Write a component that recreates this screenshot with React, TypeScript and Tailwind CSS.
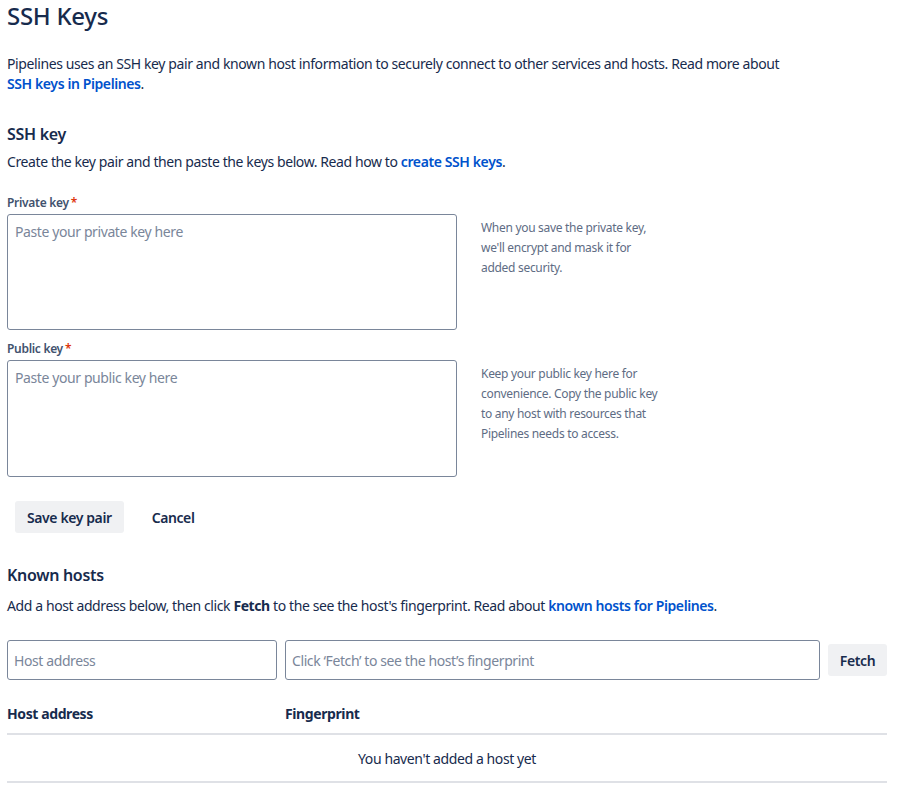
import React from "react";

export default function App() {
  return (
    <div
      className="bg-white text-[#172b4d] min-h-[799px] pl-[7px] pr-[22px]"
      style={{ fontFamily: '"Noto Sans", "Open Sans", sans-serif' }}
    >
      <h1 className="text-[24px] leading-[32px] font-medium tracking-[-0.3px]">SSH Keys</h1>
      <p className="mt-[22px] text-[14px] leading-[20px] w-[800px] tracking-[-0.4px]">
        Pipelines uses an SSH key pair and known host information to securely connect to other services and hosts. Read more about{" "}
        <br />
        <a className="text-[#0052cc] font-semibold">SSH keys in Pipelines</a>.
      </p>

      <h2 className="mt-[30px] text-[16px] leading-[20px] font-semibold tracking-[-0.3px]">SSH key</h2>
      <p className="mt-[8px] text-[14px] leading-[20px] tracking-[-0.4px]">
        Create the key pair and then paste the keys below. Read how to{" "}
        <a className="text-[#0052cc] font-semibold">create SSH keys</a>.
      </p>

      <div className="mt-[23px] flex gap-[24px]">
        <div className="w-[450px]">
          <label className="block text-[12px] leading-[16px] font-semibold text-[#42526e] tracking-[-0.3px]">
            Private key<span className="text-[#de350b] ml-[2px]">*</span>
          </label>
          <div className="mt-[3px] h-[116px] border border-[#7a869a] rounded-[3px] px-[7px] py-[7px] text-[14px] leading-[20px] text-[#7a869a] tracking-[-0.4px]">
            Paste your private key here
          </div>
        </div>
        <p className="mt-[23px] w-[185px] text-[12px] leading-[20px] text-[#5e6c84] tracking-[-0.3px]">
          When you save the private key, we'll encrypt and mask it for added security.
        </p>
      </div>

      <div className="mt-[11px] flex gap-[24px]">
        <div className="w-[450px]">
          <label className="block text-[12px] leading-[16px] font-semibold text-[#42526e] tracking-[-0.3px]">
            Public key<span className="text-[#de350b] ml-[2px]">*</span>
          </label>
          <div className="mt-[3px] h-[117px] border border-[#7a869a] rounded-[3px] px-[7px] py-[7px] text-[14px] leading-[20px] text-[#7a869a] tracking-[-0.4px]">
            Paste your public key here
          </div>
        </div>
        <p className="mt-[23px] w-[185px] text-[12px] leading-[20px] text-[#5e6c84] tracking-[-0.3px]">
          Keep your public key here for convenience. Copy the public key to any host with resources that Pipelines needs to access.
        </p>
      </div>

      <div className="mt-[24px] ml-[8px] flex items-center gap-[16px]">
        <button className="h-[32px] px-[12px] rounded-[3px] bg-[#f0f1f3] text-[14px] font-semibold text-[#172b4d] tracking-[-0.4px]">
          Save key pair
        </button>
        <button className="h-[32px] px-[12px] rounded-[3px] text-[14px] font-semibold text-[#172b4d] tracking-[-0.4px]">
          Cancel
        </button>
      </div>

      <h2 className="mt-[32px] text-[16px] leading-[20px] font-semibold tracking-[-0.3px]">Known hosts</h2>
      <p className="mt-[11px] text-[14px] leading-[20px] tracking-[-0.4px]">
        Add a host address below, then click <b className="font-bold">Fetch</b> to the see the host's fingerprint. Read about{" "}
        <a className="text-[#0052cc] font-semibold">known hosts for Pipelines</a>.
      </p>

      <div className="mt-[24px] flex items-center gap-[8px]">
        <div className="w-[270px] h-[40px] border border-[#7a869a] rounded-[3px] px-[6px] flex items-center text-[14px] text-[#7a869a] tracking-[-0.4px]">
          Host address
        </div>
        <div className="w-[535px] h-[40px] border border-[#7a869a] rounded-[3px] px-[6px] flex items-center text-[14px] text-[#7a869a] tracking-[-0.4px]">
          Click ‘Fetch’ to see the host’s fingerprint
        </div>
        <button className="h-[32px] w-[59px] rounded-[3px] bg-[#f0f1f3] text-[14px] font-semibold text-[#172b4d] tracking-[-0.4px]">
          Fetch
        </button>
      </div>

      <div className="mt-[20px] w-[880px]">
        <div className="flex h-[35px] items-center border-b-2 border-[#dfe1e6] text-[14px] font-bold text-[#172b4d] tracking-[-0.4px] pb-[6px]">
          <div className="w-[278px]">Host address</div>
          <div>Fingerprint</div>
        </div>
        <div className="h-[48px] flex items-center justify-center border-b-2 border-[#dfe1e6] text-[14px] tracking-[-0.4px]">
          You haven't added a host yet
        </div>
      </div>
    </div>
  );
}
